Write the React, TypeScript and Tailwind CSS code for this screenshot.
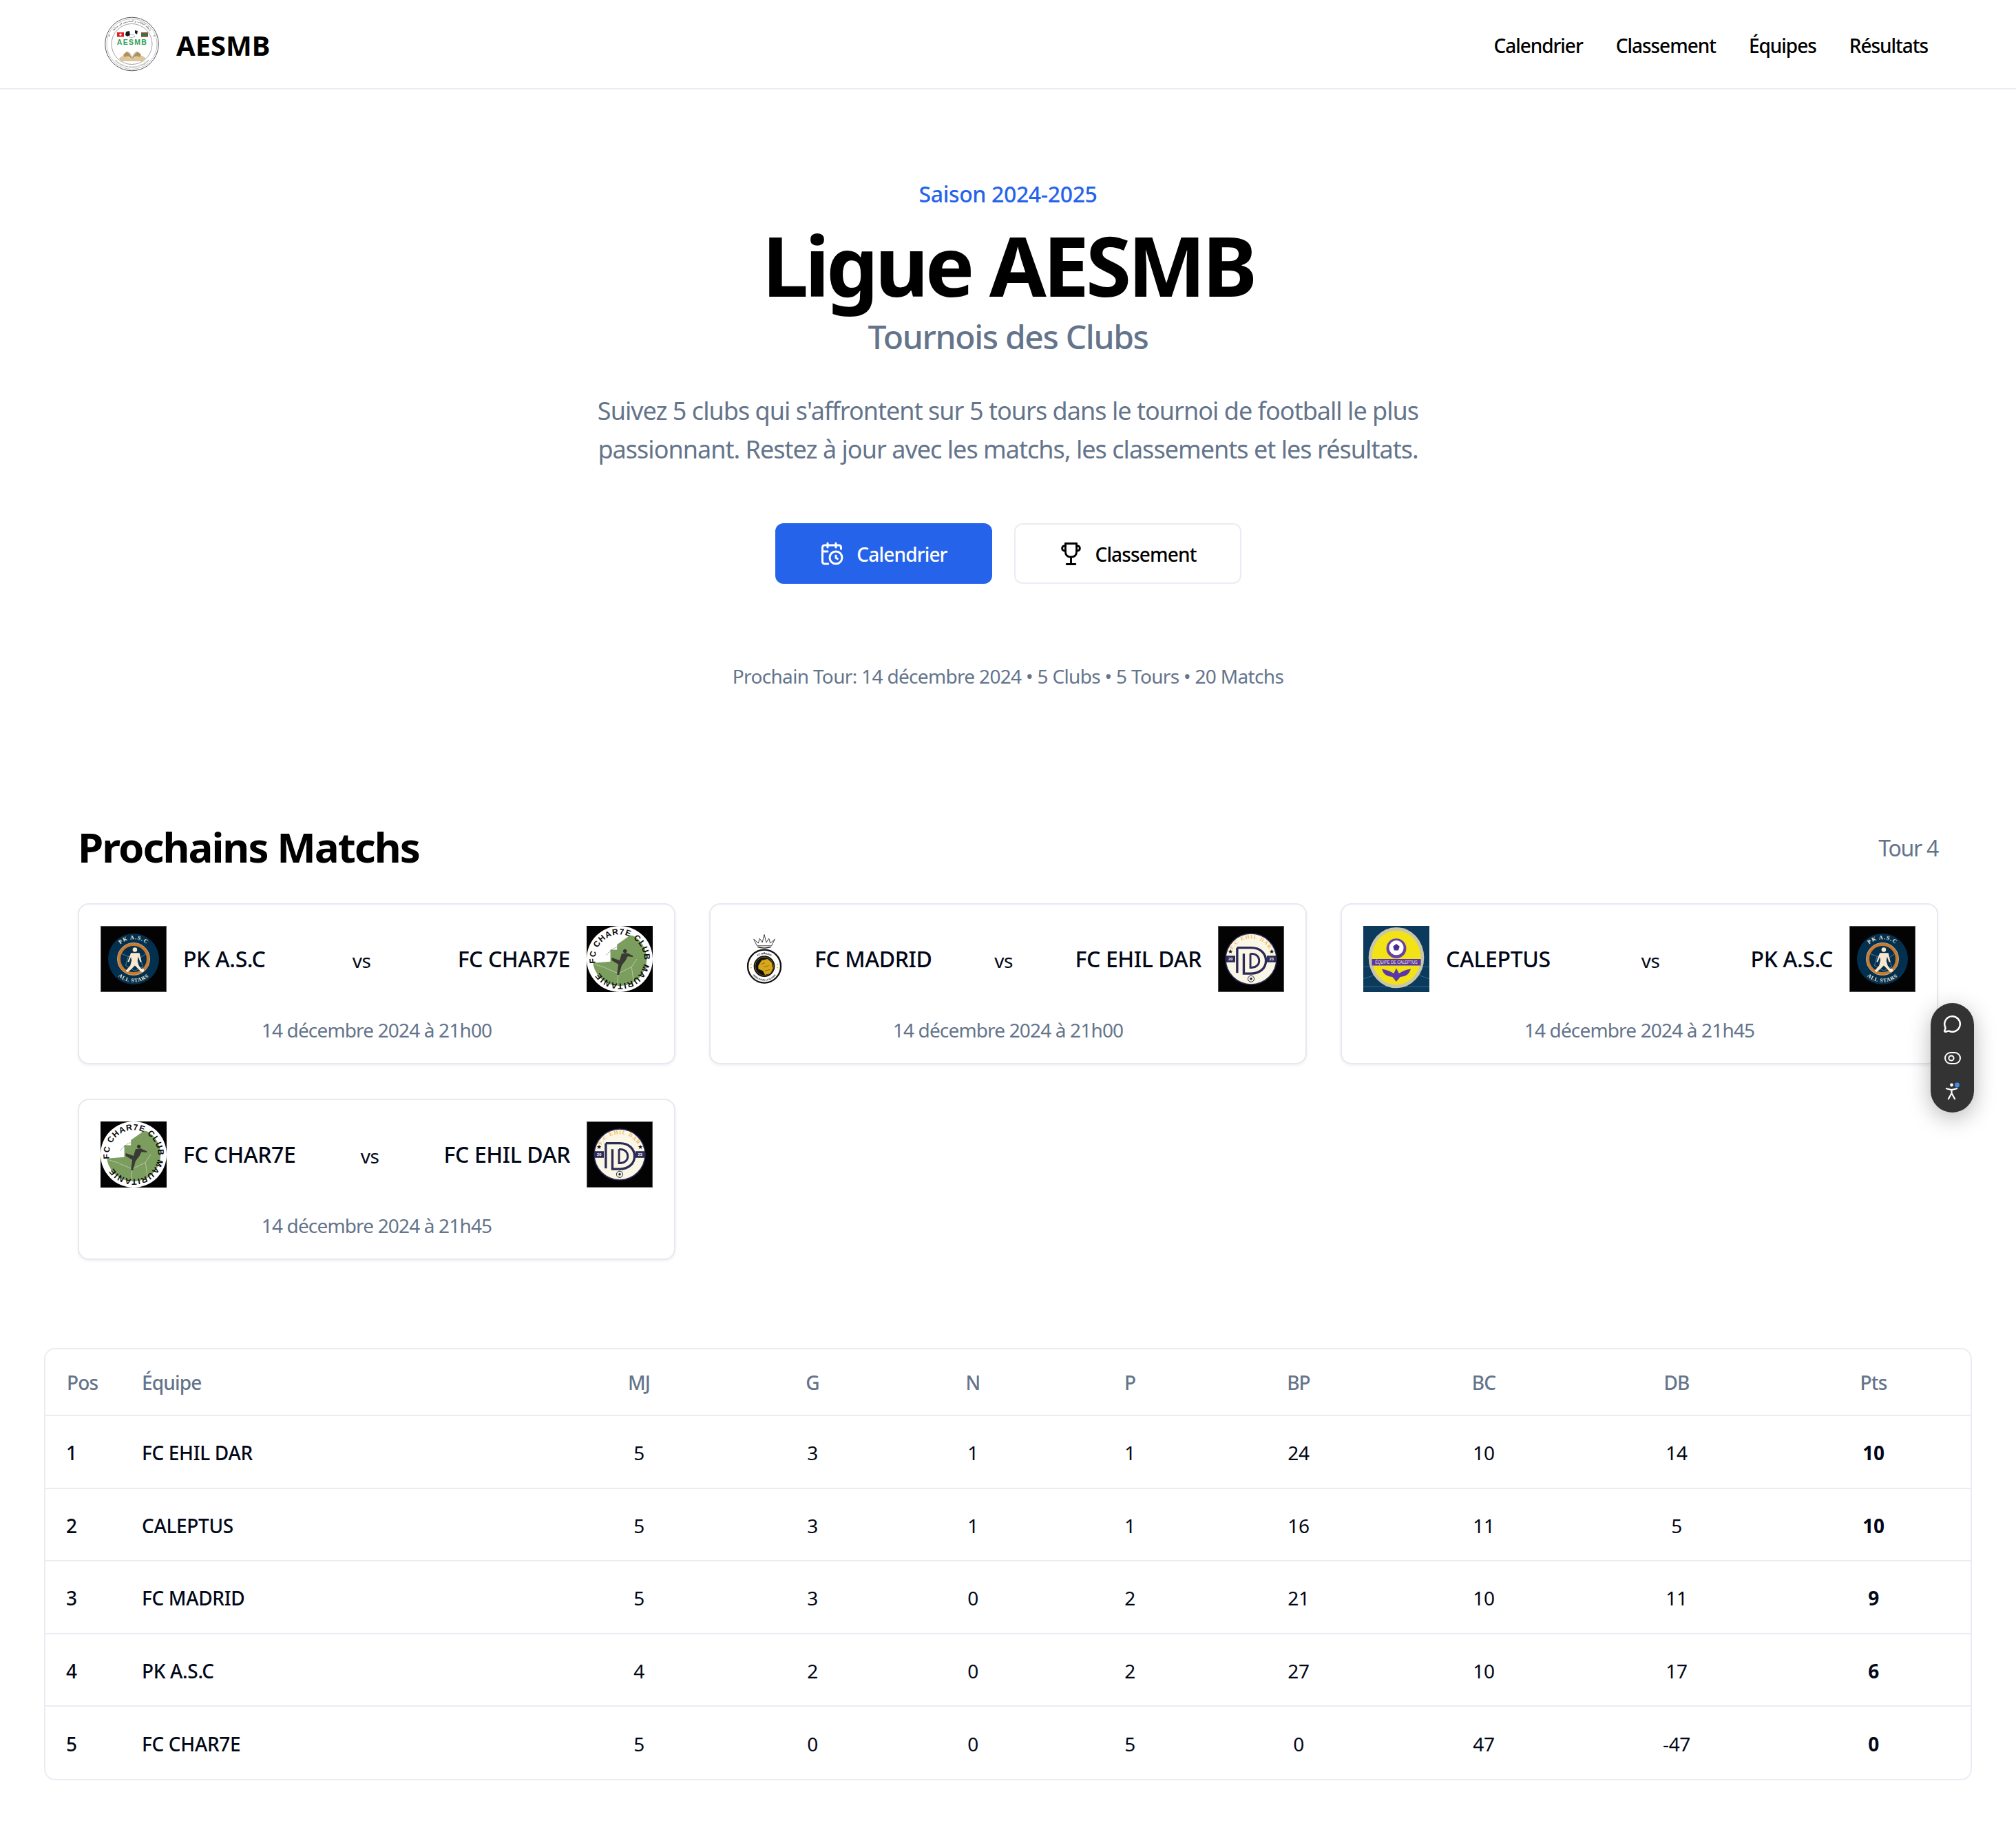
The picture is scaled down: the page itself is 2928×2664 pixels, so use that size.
import React, { useId } from "react";
import { CalendarClock, MessageCircle } from "lucide-react";

const Arc = ({ id, d, text, size, fill, weight = 700, spacing = 0, font = "Liberation Sans" }: any) => (
  <>
    <path id={id} d={d} fill="none" />
    <text fontSize={size} fill={fill} fontWeight={weight} letterSpacing={spacing} fontFamily={font}>
      <textPath href={`#${id}`} startOffset="50%" textAnchor="middle">{text}</textPath>
    </text>
  </>
);

const PkLogo = () => {
  const id = useId();
  return (
    <svg viewBox="0 0 100 100" className="w-[96px] h-[96px] shrink-0">
      <rect width="100" height="100" fill="#030303" />
      <rect x="0.5" y="0.5" width="99" height="99" fill="none" stroke="#555" strokeWidth="1" />
      <circle cx="50" cy="50" r="38.5" fill="#04304f" />
      <circle cx="50" cy="50" r="22" fill="#04304f" stroke="#c97a2b" strokeWidth="4.5" />
      <circle cx="50" cy="50" r="24.500" fill="none" stroke="#f0d9b5" strokeWidth="0.7" />
      <path d="M31 42 L42 46 L38 60 M69 42 L60 48 L64 62 M42 46 L60 48 M38 60 L52 68 L64 62" fill="none" stroke="#7f9db3" strokeWidth="0.7" />
      <circle cx="52" cy="36" r="3.4" fill="#f8e7cf" />
      <path d="M46 41 L59 41 L62 54 L60 55 L57 46 L56 53 L58 60 L64 68 L61 69 L52 60 L46 66 L41 70 L38 68 L45 60 L47 52 L46 47 L43 55 L41 54 Z" fill="#f8e7cf" />
      <circle cx="63" cy="67" r="2.800" fill="#f8f0e0" />
      <Arc id={id + "a"} d="M20 50 A30 30 0 0 1 80 50" text="PK A.S.C" size={8.5} fill="#f5ead6" font="Liberation Serif" spacing={1.2} />
      <Arc id={id + "b"} d="M15 50 A35 35 0 0 0 85 50" text="ALL STARS" size={8} fill="#f5ead6" font="Liberation Serif" spacing={0.9} />
    </svg>
  );
};

const CharLogo = () => {
  const id = useId();
  return (
    <svg viewBox="0 0 100 100" className="w-[96px] h-[96px] shrink-0">
      <defs>
        <clipPath id={id + "c"}><circle cx="50" cy="50" r="41" /></clipPath>
      </defs>
      <rect width="100" height="100" fill="#030303" />
      <circle cx="50" cy="50" r="50" fill="#fff" />
      <g clipPath={`url(#${id}c)`}>
        <path d="M10 56 L36 54 L36 36 L46 36 L46 28 L66 14 L95 20 L95 95 L5 95 Z" fill="#7b9e5f" />
        <path d="M25 62 L48 72 L46 92 M48 72 L68 62 L76 50 M12 58 L25 62 M68 62 L72 90" fill="none" stroke="#dbe7cf" strokeWidth="0.6" />
      </g>
      <circle cx="58" cy="38" r="2.800" fill="#333" />
      <path d="M53 42 L61 41 L70 45 L70 47 L62 46 L59 52 L53 60 L49 74 L46 74 L48 58 L38 52 L38 48 L50 52 Z" fill="#3a3a34" />
      <path d="M30 44 Q38 34 46 32" fill="none" stroke="#444" strokeWidth="0.8" strokeDasharray="2 1.500" />
      <path id={id + "r"} d="M13.500 56.500 A37.070 37.070 0 0 1 86.500 43.500 A37.070 37.070 0 0 1 13.500 56.500" fill="none" />
      <text fontSize="12.500" fill="#0a0a0a" fontWeight="700" letterSpacing="1.100" fontFamily="Liberation Sans">
        <textPath href={`#${id}r`}>FC CHAR7E CLUB MAURITANIE</textPath>
      </text>
    </svg>
  );
};

const MadridLogo = () => {
  const id = useId();
  return (
    <svg viewBox="0 0 100 100" className="w-[96px] h-[96px] shrink-0">
      <path d="M33 20 L40 26 L42 19 L46 25 L49 13 L52 25 L56 19 L58 26 L65 20 L60 30 L38 30 Z" fill="#fff" stroke="#222" strokeWidth="0.9" strokeLinejoin="round" />
      <path d="M39 32 Q49 35 59 32" fill="none" stroke="#111" strokeWidth="1.300" />
      <circle cx="49" cy="61" r="25" fill="#fff" stroke="#111" strokeWidth="2.400" />
      <circle cx="49" cy="61" r="16" fill="#0d0d0d" />
      <circle cx="49" cy="61" r="14" fill="#111" stroke="#c9a227" strokeWidth="0.6" />
      <path d="M40 60 L45 52 L54 50 L60 55 L62 64 L58 72 L50 74 L47 68 L40 65 Z" fill="#d8a71c" />
      <path d="M44 58 L50 56 M48 62 L56 60 M50 68 L58 66" stroke="#6b520c" strokeWidth="0.7" fill="none" />
      <circle cx="29" cy="58" r="1" fill="#e0b020" /><circle cx="29" cy="63" r="1" fill="#e0b020" /><circle cx="69" cy="58" r="1" fill="#e0b020" /><circle cx="69" cy="63" r="1" fill="#e0b020" />
      <Arc id={id + "a"} d="M31 61 A18 18 0 0 1 67 61" text="FC MADRID" size={3.8} fill="#111" />
      <Arc id={id + "b"} d="M27 61 A22 22 0 0 0 71 61" text="SERIE POUR LA GLOIRE" size={3.4} fill="#111" />
    </svg>
  );
};

const EhilLogo = () => {
  const id = useId();
  return (
    <svg viewBox="0 0 100 100" className="w-[96px] h-[96px] shrink-0">
      <rect width="100" height="100" fill="#030303" />
      <rect x="0.5" y="0.5" width="99" height="99" fill="none" stroke="#555" strokeWidth="1" />
      <circle cx="50" cy="50" r="38.500" fill="#fbf7e6" stroke="#2c2a57" strokeWidth="1.600" />
      <rect x="12" y="45" width="14" height="10" fill="#2c2a57" />
      <rect x="74" y="45" width="14" height="10" fill="#2c2a57" />
      <text x="19" y="52.500" fontSize="6" fill="#fff" textAnchor="middle" fontWeight="700" fontFamily="Liberation Sans">20</text>
      <text x="81" y="52.500" fontSize="6" fill="#fff" textAnchor="middle" fontWeight="700" fontFamily="Liberation Sans">23</text>
      <path d="M29 33 H50 C80 33 80 72 50 72 H39 V42" fill="none" stroke="#2c2a57" strokeWidth="3.500" />
      <path d="M29 33 V71" fill="none" stroke="#2c2a57" strokeWidth="3.500" />
      <path d="M49 42 H51 C66 42 66 63 51 63 H49 V42" fill="none" stroke="#2c2a57" strokeWidth="3" />
      <text x="19" y="42" fontSize="9" fill="#111" textAnchor="middle">★</text>
      <text x="81" y="42" fontSize="9" fill="#111" textAnchor="middle">★</text>
      <circle cx="50" cy="80" r="4.800" fill="#eee" stroke="#222" strokeWidth="1" />
      <circle cx="50" cy="80" r="1.800" fill="#222" />
      <Arc id={id + "a"} d="M19 50 A31 31 0 0 1 81 50" text="F.C EHIL DAR" size={8} fill="#f2b858" font="Liberation Serif" spacing={1.300} />
    </svg>
  );
};

const CaleptusLogo = () => (
  <svg viewBox="0 0 100 100" className="w-[96px] h-[96px] shrink-0" preserveAspectRatio="none">
    <rect width="100" height="100" fill="#0b3a5c" />
    <path d="M0 62 H100 M0 80 L30 70 M100 80 L70 70 M0 92 H100" stroke="#2f6c8e" strokeWidth="1" fill="none" />
    <ellipse cx="50" cy="48" rx="42" ry="46" fill="#c9c6ab" />
    <ellipse cx="50" cy="48" rx="37" ry="41" fill="#f1e315" />
    <circle cx="50" cy="34" r="15" fill="#6b3fa8" />
    <circle cx="50" cy="33" r="11" fill="#fff" />
    <path d="M50 27 L55 31 L53 37 L47 37 L45 31 Z" fill="#4a2d8c" />
    <path d="M13 50 H87 V60 H13 Z" fill="#5a36a6" />
    <text x="50" y="57.500" fontSize="7" fill="#f3eecb" textAnchor="middle" fontFamily="Liberation Sans" textLength="64" lengthAdjust="spacingAndGlyphs">ÉQUIPE DE CALEPTUS</text>
    <path d="M28 65 Q40 67 46 72 L48 68 L50 64 L52 68 L54 72 Q60 67 72 65 Q68 77 56 77 L50 84 L44 77 Q32 77 28 65 Z" fill="#5a36a6" />
  </svg>
);

const AesmbLogo = () => {
  const id = useId();
  return (
    <svg viewBox="0 0 80 80" className="w-[80px] h-[80px] shrink-0 -mt-[1px]">
      <circle cx="39.500" cy="40" r="38.800" fill="#fff" stroke="#555" strokeWidth="1" />
      <circle cx="39.500" cy="40" r="36.500" fill="none" stroke="#888" strokeWidth="0.5" />
      <circle cx="39.500" cy="40" r="29.500" fill="none" stroke="#777" strokeWidth="0.7" />
      <circle cx="7" cy="28" r="1.100" fill="#999" /><circle cx="72" cy="28" r="1.100" fill="#999" />
      <Arc id={id + "a"} d="M7 40 A32.500 32.500 0 0 1 72 40" text="رابطة الطلاب و المتدربين في معاهد" size={4.200} fill="#444" weight={400} font="DejaVu Sans" />
      <Arc id={id + "b"} d="M5 40 A34.500 34.500 0 0 0 74 40" text="Association des Étudiants et Stagiaires" size={3.200} fill="#666" weight={400} />
      <rect x="18" y="23" width="10" height="6.500" fill="#e01b22" /><circle cx="23" cy="26.200" r="1.600" fill="#fff" />
      <rect x="53" y="23" width="10" height="6.500" fill="#2c7a3f" /><rect x="53" y="23" width="10" height="1.200" fill="#d13a2e" /><rect x="53" y="28.300" width="10" height="1.200" fill="#d13a2e" />
      <path d="M31 22 L36 21 L37 27 L33 29 L30 27 Z M44 20 L48 21 L47 26 L44 24 Z" fill="#1a1a1a" />
      <path d="M36 27 Q41 24 44 29 Q40 32 36 30 Z" fill="#fff" stroke="#444" strokeWidth="0.4" />
      <text x="40" y="41" fontSize="10.500" fontWeight="700" fill="#2f9e58" textAnchor="middle" letterSpacing="1.300" fontFamily="Liberation Sans">AESMB</text>
      <path d="M21 61 Q30 51 40 63 Q50 51 60 61 L57 65 H23 Z" fill="#dcc79c" />
      <path d="M27 56 Q34 45 40 62 Q46 45 53 56 L51 59 Q45 55 40 63 Q35 55 29 59 Z" fill="#b28f58" />
      <path d="M31 52 Q36 49 40 60 M49 52 Q44 49 40 60" fill="none" stroke="#7d6236" strokeWidth="0.5" />
    </svg>
  );
};

const Trophy = () => (
  <svg viewBox="0 0 32 32" className="w-[37px] h-[37px]" fill="none" stroke="#000" strokeWidth="2.500" strokeLinejoin="round" strokeLinecap="round">
    <path d="M9 3 H23 V13 C23 18 20 20 16 20 C12 20 9 18 9 13 Z" />
    <path d="M9 6 C3.500 5 3.500 13 9 12 M23 6 C28.500 5 28.500 13 23 12" />
    <path d="M16 20 V28 M10.500 29 H21.500" />
  </svg>
);

const Widget = () => (
  <div className="fixed left-[2804px] top-[1457px] w-[63px] h-[159px] rounded-full bg-[#333333] shadow-[0_8px_32px_rgba(0,0,0,0.28)] flex flex-col items-center justify-between pt-[17px] pb-[18px]">
    <MessageCircle className="w-[27px] h-[27px] text-white" strokeWidth={2.200} />
    <svg viewBox="0 0 26 26" className="w-[26px] h-[26px]" fill="none" stroke="#fff" strokeWidth="2">
      <rect x="2" y="5" width="22" height="16" rx="8" />
      <circle cx="11" cy="13" r="3.600" />
    </svg>
    <svg viewBox="0 0 26 26" className="w-[26px] h-[26px]" fill="none">
      <circle cx="11.500" cy="4" r="2.400" fill="#fff" />
      <path d="M3 9 L11.500 11 L20 9 M11.500 11 V16 L6.500 25 M11.500 16 L16.500 25" stroke="#fff" strokeWidth="2.200" />
      <circle cx="19.500" cy="4" r="3.400" fill="#3b8ef0" />
    </svg>
  </div>
);

const Match = ({ a, la, b, lb, date }: any) => (
  <div className="w-[868px] h-[234px] rounded-[16px] border-2 border-[#e5e9f0] bg-white shadow-[0_2px_4px_rgba(15,23,42,0.06)] px-[31px] pt-[31px]">
    <div className="flex items-center justify-between">
      <div className="flex items-center gap-[24px]">
        {la}
        <span className="text-[32px] leading-[48px] font-medium tracking-[-0.013em] text-[#020817]">{a}</span>
      </div>
      <span className="text-[28px] leading-[40px] tracking-[-0.02em] text-[#020817] mt-[4px]">vs</span>
      <div className="flex items-center gap-[24px]">
        <span className="text-[32px] leading-[48px] font-medium tracking-[-0.013em] text-[#020817]">{b}</span>
        {lb}
      </div>
    </div>
    <p className="mt-[35px] text-center text-[28px] leading-[40px] tracking-[-0.03em] text-[#64748b]">{date}</p>
  </div>
);

const rows = [
  [1, "FC EHIL DAR", 5, 3, 1, 1, 24, 10, 14, 10],
  [2, "CALEPTUS", 5, 3, 1, 1, 16, 11, 5, 10],
  [3, "FC MADRID", 5, 3, 0, 2, 21, 10, 11, 9],
  [4, "PK A.S.C", 4, 2, 0, 2, 27, 10, 17, 6],
  [5, "FC CHAR7E", 5, 0, 0, 5, 0, 47, -47, 0],
];

const Standings = () => (
  <div className="mt-[128px] mx-[64px] rounded-[16px] border-2 border-[#e9edf3] overflow-hidden">
    <table className="w-full table-fixed border-collapse text-[28px] leading-[40px]">
      <colgroup>
        <col className="w-[108px]" />
        <col className="w-[618px]" />
        <col className="w-[272px]" />
        <col className="w-[232px]" />
        <col className="w-[234px]" />
        <col className="w-[222px]" />
        <col className="w-[268px]" />
        <col className="w-[270px]" />
        <col className="w-[290px]" />
        <col className="w-[282px]" />
      </colgroup>
      <thead>
        <tr className="h-[96px] border-b-2 border-[#e9edf3] text-[#64748b] tracking-[-0.03em]">
          <th className="pl-[31px] text-left font-medium">Pos</th>
          <th className="pl-[32px] text-left font-medium">Équipe</th>
          {["MJ", "G", "N", "P", "BP", "BC", "DB", "Pts"].map((h) => (
            <th key={h} className="text-center font-medium">{h}</th>
          ))}
        </tr>
      </thead>
      <tbody className="text-[#020817] tracking-[-0.012em]">
        {rows.map((r, i) => (
          <tr key={i} className={i < 4 ? "h-[105.6px] border-b-2 border-[#e9edf3]" : "h-[105.6px]"}>
            <td className="pl-[30px] pt-[3px] font-medium">{r[0]}</td>
            <td className="pl-[32px] pt-[3px] font-medium">{r[1]}</td>
            {r.slice(2, 9).map((c, j) => (
              <td key={j} className="text-center pt-[3px]">{c}</td>
            ))}
            <td className="text-center pt-[3px] font-bold">{r[9]}</td>
          </tr>
        ))}
      </tbody>
    </table>
  </div>
);

export default function App() {
  return (
    <div className="relative min-h-[2664px] bg-white text-black font-['Noto_Sans',sans-serif]">
      <nav className="h-[130px] border-b-2 border-[#e9edf3] flex items-center justify-between pl-[152px] pr-[128px]">
        <div className="flex items-center gap-[24px]">
          <AesmbLogo />
          <span className="mt-[3px] text-[40px] leading-[56px] font-bold">AESMB</span>
        </div>
        <div className="mt-[3px] flex items-center gap-[48px] text-[28px] leading-[40px] font-medium tracking-[-0.037em]">
          <span>Calendrier</span>
          <span>Classement</span>
          <span>Équipes</span>
          <span>Résultats</span>
        </div>
      </nav>

      <header className="pt-[128px] flex flex-col items-center text-center">
        <p className="text-[32px] leading-[48px] font-medium tracking-[-0.011em] text-[#2563eb]">Saison 2024-2025</p>
        <h1 className="mt-[19px] text-[120px] leading-[120px] font-bold tracking-[-5px]">Ligue AESMB</h1>
        <h2 className="mt-[12px] text-[48px] leading-[64px] font-medium tracking-[-0.028em] text-[#64748b]">Tournois des Clubs</h2>
        <p className="mt-[48px] w-[1344px] text-[36px] leading-[56px] tracking-[-0.027em] text-[#64748b]">
          Suivez 5 clubs qui s'affrontent sur 5 tours dans le tournoi de football le plus<br />passionnant. Restez à jour avec les matchs, les classements et les résultats.
        </p>
        <div className="mt-[79px] flex items-center gap-[32px]">
          <button className="w-[315px] h-[88px] rounded-[12px] bg-[#2563eb] text-white text-[28px] font-medium tracking-[-0.03em] flex items-center justify-center gap-[18px]">
            <CalendarClock className="w-[36px] h-[36px]" strokeWidth={2} />
            <span className="mt-[2px]">Calendrier</span>
          </button>
          <button className="w-[330px] h-[88px] rounded-[12px] border-2 border-[#e9edf3] bg-white text-black text-[28px] font-medium tracking-[-0.03em] flex items-center justify-center gap-[16px]">
            <Trophy />
            <span className="mt-[2px]">Classement</span>
          </button>
        </div>
        <p className="mt-[114px] text-[28px] leading-[40px] tracking-[-0.024em] text-[#64748b]">
          Prochain Tour: 14 décembre 2024 • 5 Clubs • 5 Tours • 20 Matchs
        </p>
      </header>

      <section className="mt-[192px] px-[113px]">
        <div className="flex items-center justify-between">
          <h2 className="text-[60px] leading-[72px] font-bold tracking-[-0.033em]">Prochains Matchs</h2>
          <span className="mt-[4px] text-[32px] leading-[48px] tracking-[-0.04em] text-[#64748b]">Tour 4</span>
        </div>
        <div className="mt-[46px] grid grid-cols-[868px_868px_868px] gap-x-[49px] gap-y-[50px]">
          <Match a="PK A.S.C" la={<PkLogo />} b="FC CHAR7E" lb={<CharLogo />} date="14 décembre 2024 à 21h00" />
          <Match a="FC MADRID" la={<MadridLogo />} b="FC EHIL DAR" lb={<EhilLogo />} date="14 décembre 2024 à 21h00" />
          <Match a="CALEPTUS" la={<CaleptusLogo />} b="PK A.S.C" lb={<PkLogo />} date="14 décembre 2024 à 21h45" />
          <Match a="FC CHAR7E" la={<CharLogo />} b="FC EHIL DAR" lb={<EhilLogo />} date="14 décembre 2024 à 21h45" />
        </div>
      </section>

      <Standings />
      <Widget />
    </div>
  );
}
